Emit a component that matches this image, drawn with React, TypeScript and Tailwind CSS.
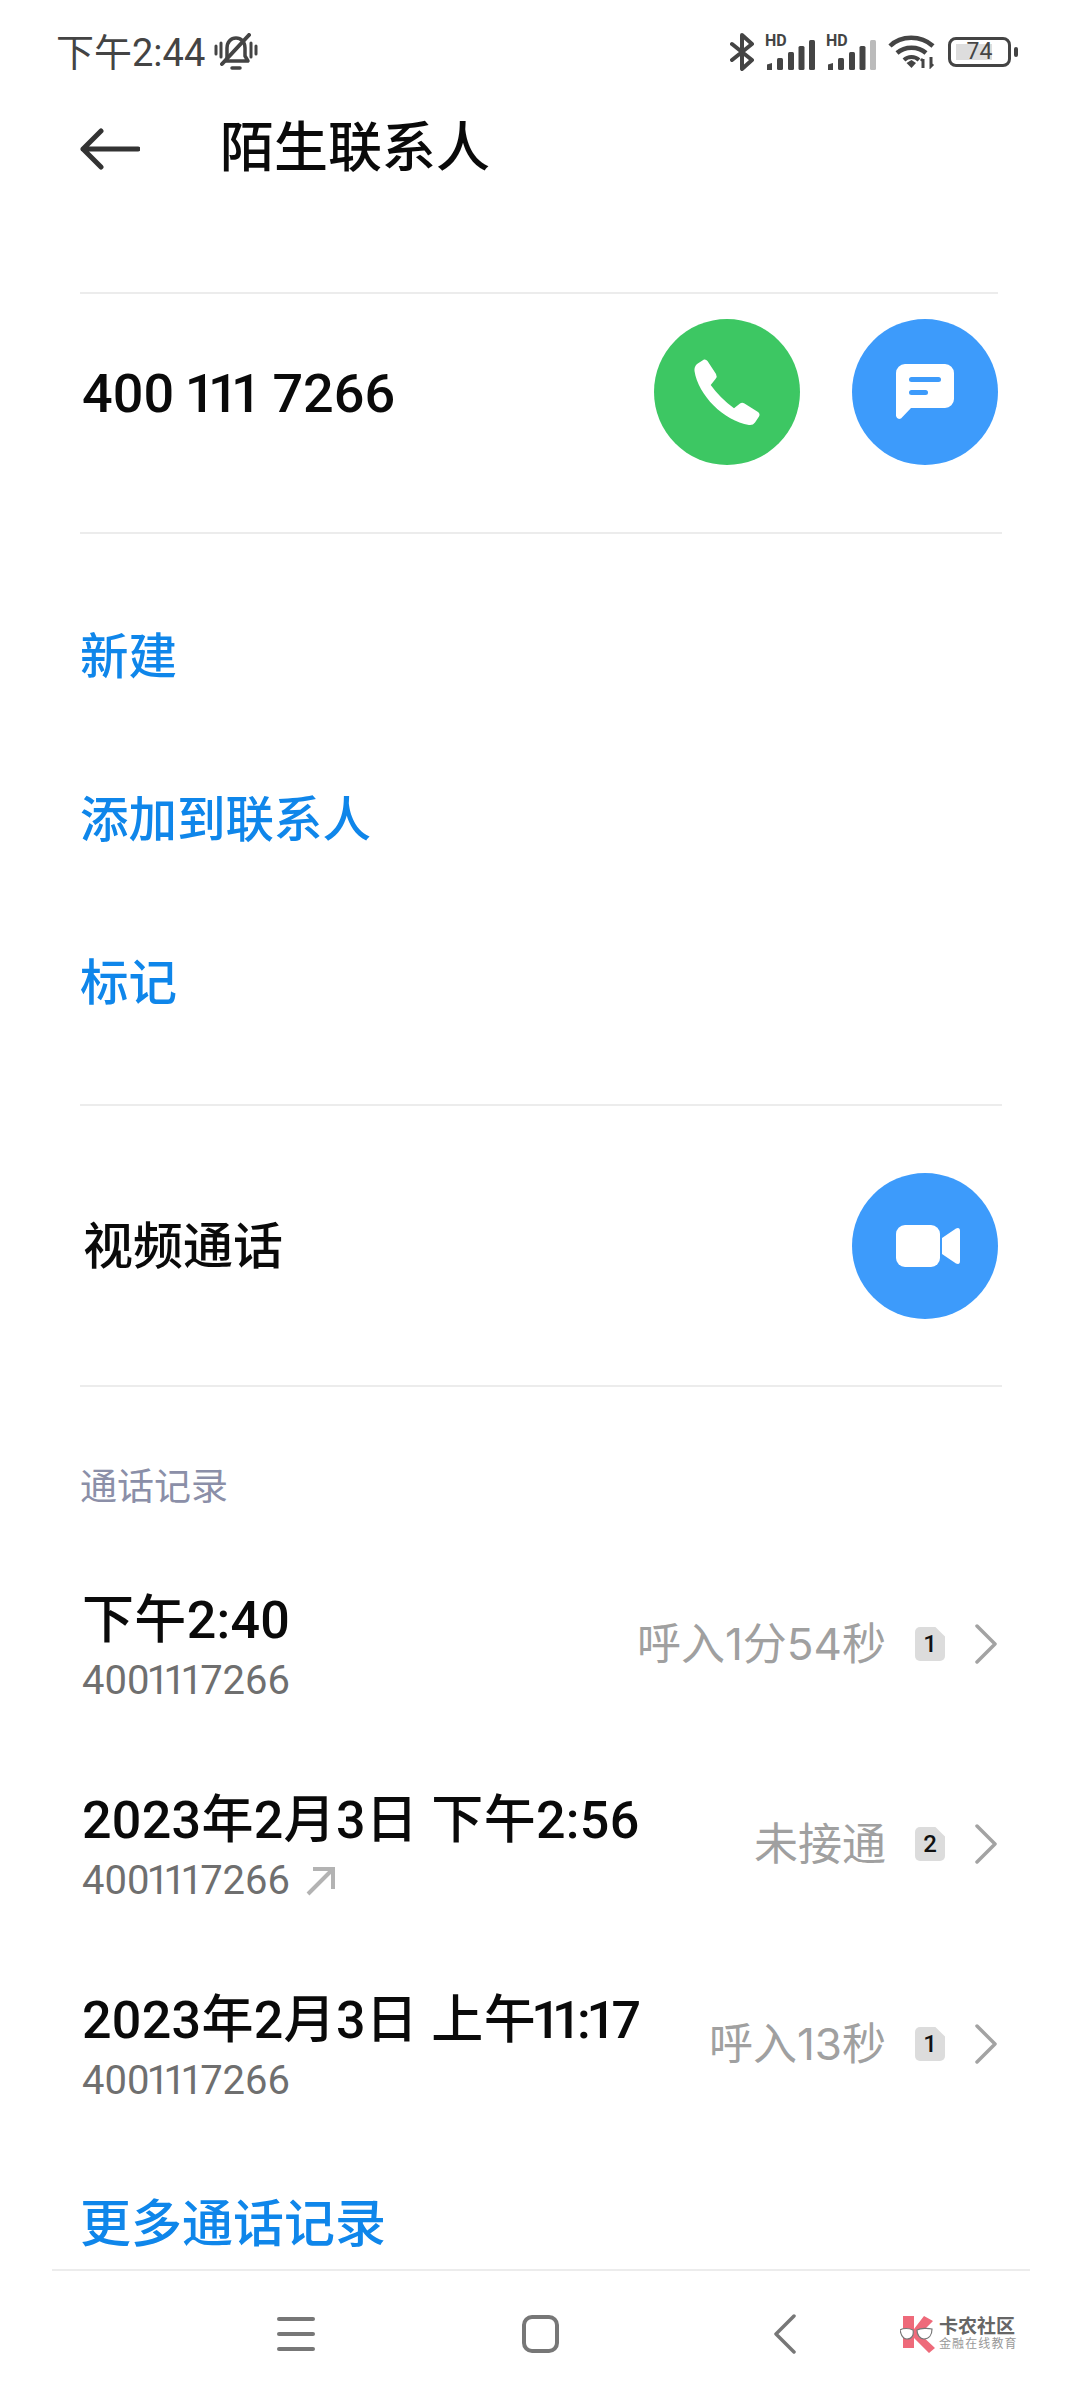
const FONT = "font-['Roboto','Noto_Sans_CJK_SC',sans-serif]";

function Num({ text, small }: { text: string; small?: boolean }) {
  return (
    <>
      {text.split("").map((c, i) => {
        const one = c === "1";
        const nextOne = text[i + 1] === "1";
        let cls = "";
        if (one && nextOne) cls = small ? "tracking-[-0.14em]" : "tracking-[-0.17em]";
        else if (one || nextOne) cls = small ? "tracking-[-0.07em]" : "tracking-[-0.085em]";
        return (
          <span key={i} className={cls}>
            {c}
          </span>
        );
      })}
    </>
  );
}

function Bell() {
  return (
    <svg width="44" height="40" viewBox="0 0 44 40" fill="none" stroke="#444" strokeLinecap="round">
      <path d="M2 13v8M7 10v14M37 10v14M42 13v8" strokeWidth="3" />
      <path d="M13 26V15C13 9 17 5 22 5s9 4 9 10v8l3 5H12" strokeWidth="3.5" strokeLinejoin="round" />
      <path d="M18 35h8" strokeWidth="3.5" />
      <path d="M8 31 35 2" strokeWidth="4" />
    </svg>
  );
}

function Bluetooth() {
  return (
    <svg width="25" height="38" viewBox="0 0 25 38" fill="none" stroke="#444" strokeWidth="4" strokeLinecap="round" strokeLinejoin="round">
      <path d="M2 11 22 27 12 36V2l10 9L2 27" />
    </svg>
  );
}

function Signal({ dim }: { dim?: boolean }) {
  return (
    <svg width="50" height="36" viewBox="0 0 50 36" fill="#444" className="overflow-visible">
      <text x="0" y="12" fontSize="16" fontWeight="700" fontFamily="Roboto, sans-serif" fill="#444">HD</text>
      <path d="M2 30.5 7 29v7H2z" />
      <rect x="12" y="24" width="6" height="12" rx="1.5" />
      <rect x="23" y="18" width="6" height="18" rx="1.5" />
      <rect x="33.5" y="12" width="6" height="24" rx="1.5" />
      <rect x="44" y="6" width="6" height="30" rx="1.5" fill={dim ? "#bbb" : "#444"} />
    </svg>
  );
}

function Wifi() {
  return (
    <svg width="48" height="34" viewBox="0 0 48 34" fill="none" stroke="#444" strokeWidth="4.5">
      <path d="M2 11C13 0 33 0 45 11" />
      <path d="M9 18C17 11 30 11 38 18" />
      <path d="M16 25C20 21 27 21 31 25" strokeWidth="4" />
      <path d="M18.5 28 23.500 33 28 28 23.500 25z" fill="#444" stroke="none" />
      <path d="M35 24v9M33 26l2-2M43 22v9l2-2" strokeWidth="3" />
    </svg>
  );
}

function Battery() {
  return (
    <div className="flex items-center gap-[3px]">
      <div className="relative w-[63px] h-[30px] rounded-[8px] border-[3px] border-[#444] flex items-center justify-center overflow-hidden">
        <div className="absolute left-[5px] top-[4px] bottom-[4px] w-[36px] bg-[#ddd]" />
        <span className="relative text-[23px] leading-none text-[#444]">74</span>
      </div>
      <div className="w-[4px] h-[10px] rounded-[2px] bg-[#444]" />
    </div>
  );
}

function Circle({ color, children }: { color: string; children: React.ReactNode }) {
  return (
    <div className={`w-[146px] h-[146px] rounded-full flex items-center justify-center ${color}`}>{children}</div>
  );
}

function Badge({ n }: { n: string }) {
  return (
    <div className="w-[30px] h-[34px] rounded-[5px] bg-[#dcdcdc] [clip-path:polygon(0_0,68%_0,100%_28%,100%_100%,0_100%)] flex items-center justify-center text-[24px] font-medium leading-none text-[#111]">
      {n}
    </div>
  );
}

function Chevron() {
  return (
    <svg width="24" height="40" viewBox="0 0 24 40" fill="none" stroke="#a3a3a3" strokeWidth="3.500" strokeLinecap="round" strokeLinejoin="round">
      <path d="M3 2 21 20 3 38" />
    </svg>
  );
}

function CallRow({ time, detail, n, outgoing }: { time: string; detail: string; n: string; outgoing?: boolean }) {
  return (
    <div className="h-[200px] flex items-center pl-[82px] pr-[82px]">
      <div className="flex-1 min-w-0 pt-[7px]">
        <div className="text-[52px] leading-[60px] font-medium tracking-[0.3px] text-[#0a0a0a] whitespace-nowrap">
          <Num text={time} />
        </div>
        <div className="mt-[7px] flex items-center gap-[16px] text-[40px] leading-[46px] text-[#6f6f6f]">
          <span>
            <Num text="4001117266" small />
          </span>
          {outgoing && (
            <svg width="30" height="30" viewBox="0 0 30 30" fill="none" stroke="#b3b3b3" strokeWidth="4">
              <path d="M2 28 27 3M7 3h20v20" />
            </svg>
          )}
        </div>
      </div>
      <div className="font-['Inter','Noto_Sans_CJK_SC',sans-serif] text-[44px] leading-none text-[#a0a0a0] whitespace-nowrap">{detail}</div>
      <div className="ml-[29px] mr-[29px]">
        <Badge n={n} />
      </div>
      <Chevron />
    </div>
  );
}

function Logo() {
  return (
    <div className="flex items-center gap-[3px]">
      <svg width="36" height="38" viewBox="0 0 36 38">
        <path d="M3 1h11v13L24 1l9 5-13 13 15 14-6 5-15-15v10H3z" fill="#ee6a7a" />
        <path d="M0 15c3-2 9-2 13 0 1 5-1 9-6 9-4 0-6-4-7-9zM17 15c4-2 11-2 15-1 0 6-3 10-8 10-4 0-7-4-7-9z" fill="#fff" stroke="#777" strokeWidth="1.200" />
      </svg>
      <div className="flex flex-col text-[#666]">
        <span className="text-[19px] leading-[20px] font-bold whitespace-nowrap">卡农社区</span>
        <span className="text-[12px] leading-[14px] tracking-[1.100px] text-[#999] whitespace-nowrap">金融在线教育</span>
      </div>
    </div>
  );
}

export default function App() {
  return (
    <div className={`w-[1080px] h-[2400px] bg-white flex flex-col overflow-hidden ${FONT}`}>
      {/* status bar */}
      <div className="h-[100px] flex items-center justify-between pl-[56px] pr-[62px] pt-[6px]">
        <div className="flex items-center gap-[9px]">
          <span className="text-[38px] leading-none text-[#444]">下午2:44</span>
          <Bell />
        </div>
        <div className="flex items-center mb-[3px]">
          <Bluetooth />
          <div className="w-[10px]" />
          <Signal />
          <div className="w-[11px]" />
          <Signal dim />
          <div className="w-[12px]" />
          <Wifi />
          <div className="w-[12px]" />
          <Battery />
        </div>
      </div>

      {/* header */}
      <div className="mt-[3px] h-[92px] flex items-center pl-[80px]">
        <svg width="60" height="42" viewBox="0 0 60 42" fill="none" stroke="#333" strokeWidth="5" strokeLinecap="round" strokeLinejoin="round">
          <path d="M58 21H3M21 3 3 21l18 18" />
        </svg>
        <span className="ml-[80px] text-[54px] leading-none font-medium text-[#0a0a0a]">陌生联系人</span>
      </div>

      {/* number */}
      <div className="mt-[97px] mx-[80px] border-t-2 border-[#ececec] h-[146px] flex items-start pt-[25px] box-content w-[918px]">
        <span className="text-[54px] leading-[150px] font-medium text-[#0a0a0a] flex-1 ml-[2px] [word-spacing:1px]">
          <Num text="400 111 7266" small />
        </span>
        <div className="flex gap-[52px]">
          <Circle color="bg-[#3dc763]">
            <svg width="67" height="67" viewBox="0 0 67 67" fill="#fff">
              <path d="M10 .5Q12 0 13.500 2L22 15Q23.500 17.500 21.500 20L16.700 26Q26 39 40 49.300L46 44.500Q48 43 50.500 44.500L64 53Q66.500 55 65 57.500L61 63.500Q59 66.500 55 66C30 62 4 36 .5 12Q0 8 3 5Z" />
            </svg>
          </Circle>
          <Circle color="bg-[#3d9bfb]">
            <svg width="58" height="56" viewBox="0 0 58 56">
              <path d="M9 0h40a9 9 0 0 1 9 9v26a9 9 0 0 1-9 9H15L5 54.500Q1 56 0 52V9a9 9 0 0 1 9-9z" fill="#fff" />
              <rect x="13" y="13" width="32" height="5" rx="2.500" fill="#3d9bfb" />
              <rect x="13" y="26" width="19" height="5" rx="2.500" fill="#3d9bfb" />
            </svg>
          </Circle>
        </div>
      </div>
      <div className="mt-[67px] mx-[80px] w-[922px] border-t-2 border-[#ececec]" />

      {/* actions */}
      <div className="pt-[43px] pb-[38px] pl-[80px] flex flex-col text-[48.500px] font-medium text-[#0f86ea]">
        <div className="h-[163px] flex items-center">新建</div>
        <div className="h-[163px] flex items-center">添加到联系人</div>
        <div className="h-[163px] flex items-center">标记</div>
      </div>

      {/* video */}
      <div className="mx-[80px] w-[922px] border-t-2 border-[#ececec] h-[281px] flex items-center pr-[4px]">
        <span className="flex-1 ml-[3px] pt-[3px] text-[50px] font-medium text-[#0a0a0a]">视频通话</span>
        <Circle color="bg-[#3d9bfb]">
          <svg className="ml-[5px]" width="64" height="42" viewBox="0 0 64 42" fill="#fff">
            <rect x="0" y="0" width="44" height="42" rx="9" />
            <path d="M46 13 60 3.500Q64 2 64 6V36Q64 40 60 38.500L46 29Z" />
          </svg>
        </Circle>
      </div>
      <div className="mx-[80px] w-[922px] border-t-2 border-[#ececec]" />

      {/* call log */}
      <div className="mt-[66px] pl-[80px] text-[37px] leading-[70px] text-[#8b8fa8] h-[70px]">通话记录</div>
      <div className="mt-[21px] flex flex-col">
        <CallRow time="下午2:40" detail="呼入1分54秒" n="1" />
        <CallRow time="2023年2月3日 下午2:56" detail="未接通" n="2" outgoing />
        <CallRow time="2023年2月3日 上午11:17" detail="呼入13秒" n="1" />
      </div>
      <div className="mt-[36px] pl-[80px] text-[51px] leading-[90px] font-medium text-[#0f86ea]">更多通话记录</div>

      {/* nav */}
      <div className="mt-[-1px] ml-[52px] w-[978px] border-t-2 border-[#ececec] h-[128px] relative flex items-center pl-[225px]">
        <div className="w-[38px] flex flex-col gap-[11px]">
          <div className="h-[4px] rounded-full bg-[#777]" />
          <div className="h-[4px] rounded-full bg-[#777]" />
          <div className="h-[4px] rounded-full bg-[#777]" />
        </div>
        <div className="ml-[207px] w-[37px] h-[38px] rounded-[10px] border-[4px] border-[#777]" />
        <svg className="ml-[214px]" width="24" height="40" viewBox="0 0 24 40" fill="none" stroke="#777" strokeWidth="3.500" strokeLinecap="round" strokeLinejoin="round">
          <path d="M21 2 3 20l18 18" />
        </svg>
        <div className="ml-[103px]">
          <Logo />
        </div>
      </div>
    </div>
  );
}
